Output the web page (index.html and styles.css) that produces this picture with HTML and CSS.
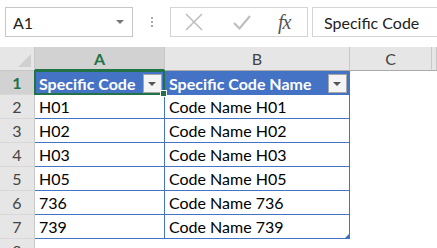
FILE: index.html
```html
<!DOCTYPE html>
<html>
<head>
    <title>Specific Codes</title>
    <link rel="stylesheet" href="styles.css">
</head>
<body>
    <!-- Formula bar -->
    <div class="formula-bar">
        <div class="name-box">
            <span>A1</span>
            <span class="caret"></span>
        </div>
        <div class="grip"><i></i><i></i><i></i></div>
        <div class="fx-buttons">
            <svg class="btn-icon" width="20" height="20" viewBox="0 0 20 20">
                <path d="M2 2 L18 18 M18 2 L2 18" stroke="#bdbdbd" stroke-width="1.6" fill="none"/>
            </svg>
            <svg class="btn-icon" width="20" height="20" viewBox="0 0 20 20">
                <path d="M2 11 L7.5 16.5 L18 4" stroke="#bdbdbd" stroke-width="2" fill="none"/>
            </svg>
            <span class="fx">fx</span>
        </div>
        <div class="formula-input">Specific Code</div>
    </div>

    <!-- Worksheet -->
    <div class="sheet">
        <div class="corner"><span class="tri"></span></div>
        <div class="col-head active">A</div>
        <div class="col-head">B</div>
        <div class="col-head">C</div>
        <div class="col-head"></div>

        <div class="row-head active">1</div>
        <div class="cell th">Specific Code <span class="filter"></span></div>
        <div class="cell th">Specific Code Name <span class="filter"></span></div>
        <div class="cell rest"></div>

        <div class="row-head">2</div>
        <div class="cell td">H01</div>
        <div class="cell td">Code Name H01</div>
        <div class="cell rest"></div>

        <div class="row-head">3</div>
        <div class="cell td">H02</div>
        <div class="cell td">Code Name H02</div>
        <div class="cell rest"></div>

        <div class="row-head">4</div>
        <div class="cell td">H03</div>
        <div class="cell td">Code Name H03</div>
        <div class="cell rest"></div>

        <div class="row-head">5</div>
        <div class="cell td">H05</div>
        <div class="cell td">Code Name H05</div>
        <div class="cell rest"></div>

        <div class="row-head">6</div>
        <div class="cell td">736</div>
        <div class="cell td">Code Name 736</div>
        <div class="cell rest"></div>

        <div class="row-head">7</div>
        <div class="cell td">739</div>
        <div class="cell td last">Code Name 739<span class="resize"></span></div>
        <div class="cell rest"></div>

        <div class="row-head">8</div>
        <div class="cell empty-row"></div>

        <!-- selected cell outline -->
        <div class="selection"><span class="handle"></span></div>
    </div>
</body>
</html>
```

FILE: styles.css
```css
body {
    margin: 0;
    background: #ffffff;
    font-family: 'Lato', 'Liberation Sans', sans-serif;
    overflow: hidden;
    width: 437px;
    height: 248px;
}

/* Formula bar */
.formula-bar {
    display: flex;
    align-items: center;
    height: 30px;
    padding: 7px 0 0 5px;
}

.name-box {
    box-sizing: border-box;
    width: 128px;
    height: 30px;
    border: 1px solid #c6c6c6;
    display: flex;
    align-items: center;
    justify-content: space-between;
    padding: 0 8px 0 7px;
    font-size: 16px;
    color: #222;
}

.caret {
    width: 0;
    height: 0;
    border-left: 4px solid transparent;
    border-right: 4px solid transparent;
    border-top: 4px solid #777;
}

.grip {
    width: 37px;
    display: flex;
    flex-direction: column;
    align-items: center;
    gap: 2px;
}

.grip i {
    width: 2px;
    height: 2px;
    background: #a8a8a8;
}

.fx-buttons {
    box-sizing: border-box;
    width: 138px;
    height: 30px;
    border: 1px solid #d4d4d4;
    display: flex;
    align-items: center;
    padding-left: 13px;
    gap: 28px;
}

.fx {
    font-family: 'Liberation Serif', serif;
    font-style: italic;
    font-size: 20px;
    color: #555;
    letter-spacing: -1px;
    margin-left: -2px;
}

.formula-input {
    box-sizing: border-box;
    flex: 1;
    height: 30px;
    margin-left: 4px;
    border: 1px solid #d4d4d4;
    border-right: none;
    display: flex;
    align-items: center;
    padding-left: 11px;
    font-size: 16px;
    color: #222;
    white-space: nowrap;
}

/* Worksheet grid */
.sheet {
    position: relative;
    margin-top: 10px;
    display: grid;
    grid-template-columns: 35px 130px 185px 82px 1fr;
    grid-template-rows: 24px repeat(8, 24px);
}

.corner {
    background: #e6e6e6;
    border-right: 1px solid #c8c8c8;
    border-bottom: 1px solid #c8c8c8;
    box-sizing: border-box;
    position: relative;
}

.tri {
    position: absolute;
    right: 3px;
    bottom: 3px;
    width: 0;
    height: 0;
    border-left: 13px solid transparent;
    border-bottom: 13px solid #d0d0d0;
}

.col-head {
    box-sizing: border-box;
    background: #e6e6e6;
    border-right: 1px solid #c8c8c8;
    border-bottom: 1px solid #ababab;
    display: flex;
    align-items: center;
    justify-content: center;
    font-size: 16px;
    color: #444;
}

.col-head.active {
    background: #d2d2d2;
    color: #217346;
    font-weight: bold;
    border-bottom: 2px solid #217346;
}

.row-head {
    box-sizing: border-box;
    background: #e6e6e6;
    border-right: 1px solid #c8c8c8;
    border-bottom: 1px solid #d8d8d8;
    display: flex;
    align-items: center;
    justify-content: center;
    font-size: 16px;
    color: #444;
}

.row-head.active {
    background: #d2d2d2;
    color: #217346;
    font-weight: bold;
}

.cell {
    box-sizing: border-box;
    display: flex;
    align-items: center;
    padding-left: 4px;
    font-size: 16px;
    color: #000;
    white-space: nowrap;
}

.cell.rest {
    grid-column: span 2;
}

.cell.empty-row {
    grid-column: span 4;
}

.th {
    background: #4472c4;
    color: #fff;
    font-weight: bold;
    border-right: 1px solid #4472c4;
    padding-right: 2px;
}

.td {
    border-right: 1px solid #4472c4;
    border-bottom: 1px solid #4472c4;
}

.last {
    position: relative;
}

.filter {
    margin-left: auto;
    box-sizing: border-box;
    width: 19px;
    height: 19px;
    background: #f4f4f4;
    border: 1px solid #a6a6a6;
    position: relative;
}

.filter::after {
    content: '';
    position: absolute;
    left: 4px;
    top: 7px;
    border-left: 4px solid transparent;
    border-right: 4px solid transparent;
    border-top: 4px solid #555;
}

.resize {
    position: absolute;
    right: -1px;
    bottom: -1px;
    width: 0;
    height: 0;
    border-left: 6px solid transparent;
    border-bottom: 6px solid #4472c4;
}

.selection {
    position: absolute;
    left: 34px;
    top: 23px;
    width: 131px;
    height: 25px;
    border: 2px solid #217346;
    box-sizing: border-box;
    pointer-events: none;
}

.handle {
    position: absolute;
    right: -4px;
    bottom: -4px;
    width: 5px;
    height: 5px;
    background: #217346;
    border: 1px solid #fff;
}
```
